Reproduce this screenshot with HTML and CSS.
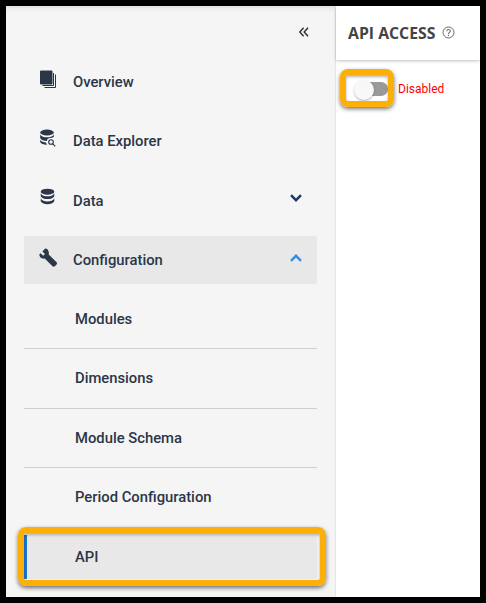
FILE: index.html
```html
<!doctype html>
<html>
    <head>
        <meta name="viewport" content="width=device-width, initial-scale=1.0">
        <title>API Access</title>
        <link rel="stylesheet" href="styles.css">
    </head>
    <body>
        <div class="window">
            <div class="sidebar">
                <div class="collapse">
                    <svg width="10" height="10" viewBox="0 0 10 10" fill="none" stroke="#2b3648" stroke-width="1.500">
                        <path d="M4.600 .8 .8 5l3.800 4.200M9 .8 5.200 5 9 9.200"/>
                    </svg>
                </div>
                <div class="nav-item">
                    <svg class="nav-icon" width="19" height="19" viewBox="0 0 19 19" fill="none" stroke="#2b3648">
                        <path d="M1.500 1h11.500v13H1.500z" fill="#2b3648"/>
                        <path d="M14.500 3v12.500H3.500M16.500 4.500v13H5.500"/>
                    </svg>
                    <span>Overview</span>
                </div>
                <div class="nav-item">
                    <svg class="nav-icon" width="19" height="19" viewBox="0 0 19 19">
                        <ellipse cx="8" cy="3.500" rx="6.800" ry="3" fill="#2b3648"/>
                        <path d="M1.200 5.500c1 2 4 2.800 6.800 2.800s5.800-.8 6.800-2.800v2.500c-1 .5-2.500 1-3.800 1-1.500 0-2.800.8-3.200 3-2.800 0-5.500-1-6.600-2.800z" fill="#2b3648"/>
                        <path d="M1.200 11c1.200 1.500 3.500 2.300 5.800 2.400.2 1 .6 1.700 1.200 2.400-3.200.2-6-.8-7-2.500z" fill="#2b3648"/>
                        <circle cx="12" cy="13" r="2.300" fill="none" stroke="#2b3648" stroke-width="1.100"/>
                        <path d="m13.700 14.800 2.600 2.600" stroke="#2b3648" stroke-width="1.200"/>
                    </svg>
                    <span>Data Explorer</span>
                </div>
                <div class="nav-item">
                    <svg class="nav-icon" width="19" height="19" viewBox="0 0 19 19">
                        <ellipse cx="8.500" cy="3.700" rx="6.800" ry="3" fill="#2b3648"/>
                        <path d="M1.700 5.500c1 2 4 2.800 6.800 2.800s5.800-.8 6.800-2.800v2.800c-1 2-4 2.800-6.800 2.800s-5.800-.8-6.800-2.800z" fill="#2b3648"/>
                        <path d="M1.700 10.600c1 2 4 2.800 6.800 2.800s5.800-.8 6.800-2.800v2.600c-1 2.100-4 3-6.800 3s-5.800-.9-6.800-3z" fill="#2b3648"/>
                    </svg>
                    <span>Data</span>
                    <svg class="chevron" width="12" height="8" viewBox="0 0 12 8" fill="none" stroke="#1f3a5f" stroke-width="2.400">
                        <path d="m1 1.200 5 5 5-5"/>
                    </svg>
                </div>
                <div class="nav-item active">
                    <svg class="nav-icon" width="19" height="19" viewBox="0 0 19 19">
                        <path d="M6.200.6 3.400 3.400 6 6 4.200 7.800 1.600 5.200.3 6.500c0 2.600 2.400 4.800 5.400 4l7.800 7.700c.7.600 1.700.6 2.300 0l1.800-1.700c.6-.7.600-1.600 0-2.300L9.700 6.400c.7-2.800-1-5.800-3.500-5.800z" fill="#2b3648"/>
                    </svg>
                    <span>Configuration</span>
                    <svg class="chevron" width="12" height="8" viewBox="0 0 12 8" fill="none" stroke="#2f8fe8" stroke-width="2.400">
                        <path d="m1 6.800 5-5 5 5"/>
                    </svg>
                </div>
                <div class="sub-item">Modules</div>
                <div class="sub-item">Dimensions</div>
                <div class="sub-item">Module Schema</div>
                <div class="sub-item last">Period Configuration</div>
                <div class="sub-item selected">
                    API
                    <div class="callout"></div>
                </div>
            </div>
            <div class="main">
                <div class="main-header">
                    <h2>API ACCESS</h2>
                    <svg width="13" height="13" viewBox="0 0 13 13" fill="none" stroke="#666">
                        <circle cx="6.500" cy="6.500" r="5.500"/>
                        <path d="M4.800 5.200c0-2.200 3.500-2.200 3.500-.1 0 1.300-1.800 1.300-1.800 2.800" stroke-width="1.100"/>
                        <path d="M6.500 8.800v1.300" stroke-width="1.100"/>
                    </svg>
                </div>
                <div class="toggle-row">
                    <div class="toggle">
                        <div class="toggle-knob"></div>
                        <div class="callout"></div>
                    </div>
                    <span class="status">Disabled</span>
                </div>
            </div>
        </div>
    </body>
</html>
```

FILE: styles.css
```css
body {
    margin: 0;
    background-color: #000;
    font-family: Roboto, "Liberation Sans", sans-serif;
    color: #2b3648;
}

.window {
    display: flex;
    width: 474px;
    height: 591px;
    margin: 6px;
    background-color: #fff;
    overflow: hidden;
}

.sidebar {
    flex: none;
    box-sizing: border-box;
    width: 330px;
    padding: 0 18px;
    background-color: #f5f5f5;
    border-right: 1px solid #e6e6e6;
    box-shadow: inset 0 6px 6px -6px #ccc;
}

.collapse {
    display: flex;
    justify-content: flex-end;
    height: 52px;
    padding: 21px 8px 0 0;
    box-sizing: border-box;
}

.nav-item {
    display: flex;
    align-items: center;
    height: 48px;
    margin-bottom: 11.400px;
    font-size: 14.800px;
    font-weight: 500;
}

.nav-icon {
    flex: none;
    margin: -6px 0 0 15px;
}

.nav-item span {
    margin-left: 15px;
}

.chevron {
    margin: -5px 15px 0 auto;
}

.active {
    background-color: #e8e8e8;
}

.sub-item {
    display: flex;
    align-items: center;
    box-sizing: border-box;
    height: 59.400px;
    margin-top: -5.700px;
    margin-bottom: 5.700px;
    padding-left: 51px;
    border-bottom: 1px solid #cfcfcf;
    font-size: 14.800px;
    font-weight: 500;
}

.last {
    height: 58.400px;
    border-bottom: none;
}

.selected {
    position: relative;
    height: 44px;
    margin-top: 9px;
    padding-left: 48px;
    background-color: #e8e8e8;
    border-bottom: none;
    border-left: 3px solid #1976d2;
}

.callout {
    position: absolute;
    border: 6px solid #fbaf08;
    border-radius: 8px;
    box-shadow: 0 2px 4px rgba(0, 0, 0, 0.55), inset 0 2px 3px rgba(0, 0, 0, 0.3);
}

.selected .callout {
    top: -8px;
    right: -9px;
    bottom: -7px;
    left: -9px;
}

.main {
    flex: 1;
    min-width: 0;
}

.main-header {
    display: flex;
    align-items: center;
    gap: 7px;
    box-sizing: border-box;
    height: 54px;
    padding: 0 0 1px 12px;
    box-shadow: 0 1px 3px rgba(0, 0, 0, 0.25);
}

.main-header h2 {
    margin: 0;
    font-family: "Open Sans", sans-serif;
    font-size: 15.800px;
    font-weight: 700;
    color: #444;
}

.toggle-row {
    display: flex;
    align-items: center;
    gap: 10px;
    padding: 22px 0 0 19px;
}

.toggle {
    position: relative;
    width: 33px;
    height: 14px;
    border-radius: 7px;
    background-color: #9a9a9a;
}

.toggle-knob {
    width: 20px;
    height: 20px;
    margin: -2px 0 0 -1px;
    border-radius: 50%;
    background-color: #f8f8f8;
    box-shadow: 0 1px 2px rgba(0, 0, 0, 0.3);
}

.toggle .callout {
    top: -13px;
    right: -6px;
    bottom: -11px;
    left: -15px;
}

.status {
    font-size: 12px;
    color: #f00;
}
```
